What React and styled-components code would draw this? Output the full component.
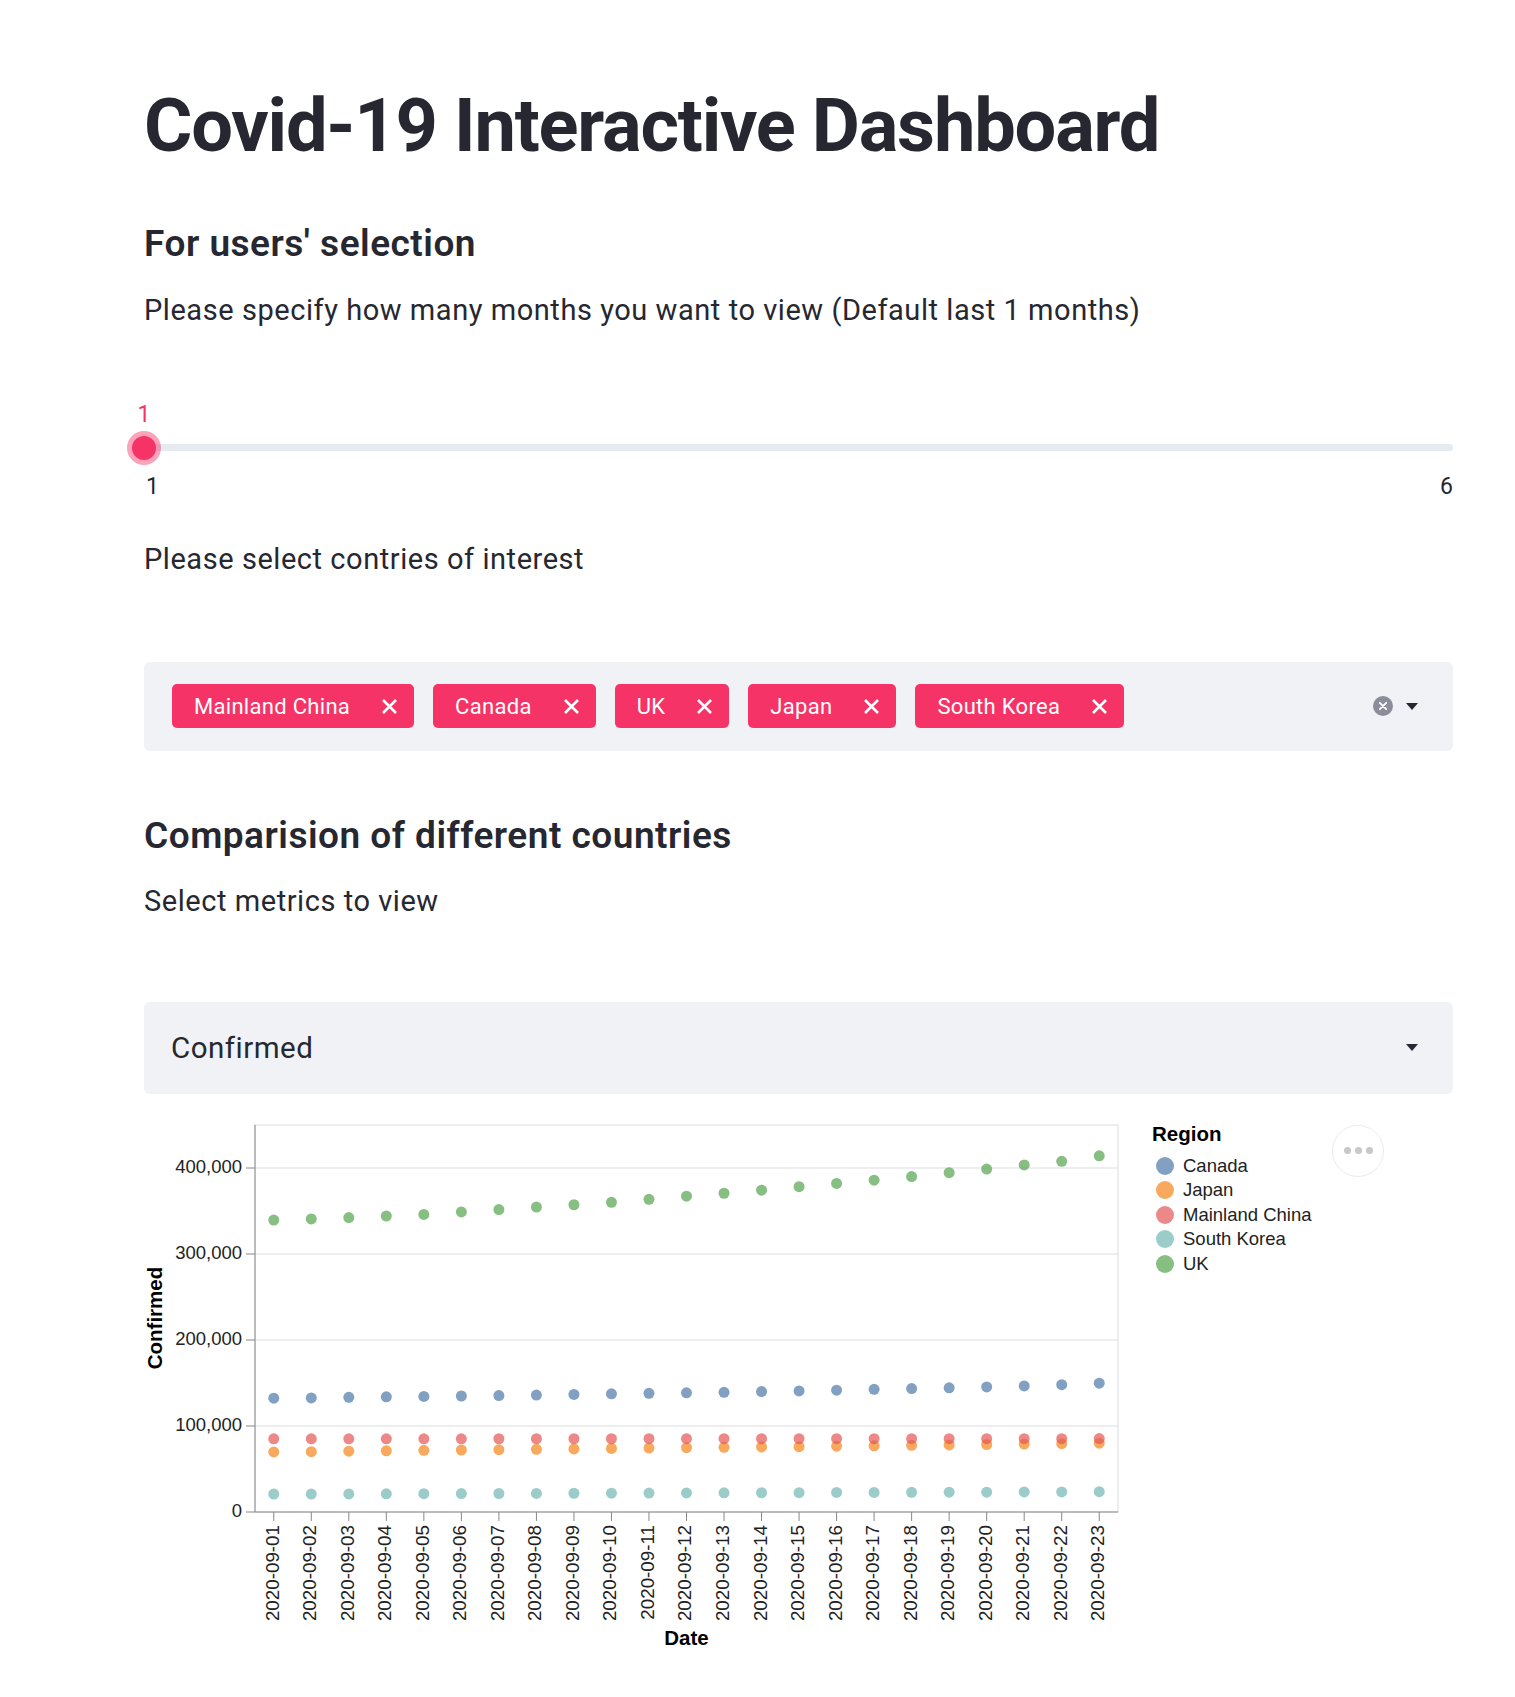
import React from 'react';
import styled, { createGlobalStyle } from 'styled-components';

const GlobalStyle = createGlobalStyle`
  body {
    margin: 0;
    background: #fff;
    color: #262730;
    font-family: Roboto, "Noto Sans", sans-serif;
  }
`;

const Page = styled.main`
  padding: 82px 62px 37px 144px;
`;

const Title = styled.h1`
  margin: 0;
  font-size: 74px;
  line-height: 1.2;
  font-weight: 700;
  letter-spacing: -1.2px;
`;

const Heading = styled.h3`
  margin: ${p => p.$top}px 0 0;
  font-size: 37px;
  line-height: 44px;
  font-weight: 600;
  letter-spacing: 0.5px;
`;

const Text = styled.p`
  margin: ${p => p.$top}px 0 0;
  font-size: 29px;
  line-height: 45px;
  letter-spacing: 0.55px;
`;

// slider
const SliderWrap = styled.div`
  position: relative;
  margin-top: 58px;
  padding-top: 53px;
`;

const Track = styled.div`
  height: 7px;
  border-radius: 4px;
  background: #e6eaf1;
`;

const Thumb = styled.span`
  position: absolute;
  top: 57px;
  width: 24px;
  height: 24px;
  margin: -12px 0 0 -12px;
  border-radius: 50%;
  background: #f63366;
  box-shadow: 0 0 0 5px rgba(246, 51, 102, 0.45);
`;

const ThumbValue = styled.span`
  position: absolute;
  top: 0;
  line-height: 48px;
  font-size: 23px;
  color: #f63366;
  transform: translateX(-50%);
`;

const TickRow = styled.div`
  display: flex;
  justify-content: space-between;
  margin-top: 20px;
  padding-left: 2px;
  line-height: 32px;
  font-size: 23px;
`;

// select boxes
const SelectBox = styled.div`
  margin-top: ${p => p.$top}px;
  height: ${p => p.$height}px;
  box-sizing: border-box;
  display: flex;
  align-items: center;
  padding: 0 35px 0 ${p => p.$padLeft}px;
  background: #f0f2f6;
  border-radius: 6px;
`;

const TagList = styled.div`
  display: flex;
  gap: 19px;
  flex: 1;
`;

const Tag = styled.span`
  display: inline-flex;
  align-items: center;
  height: 44px;
  padding: 0 16px 0 22px;
  background: #f63366;
  color: #fff;
  border-radius: 5px;
  font-size: 22px;
  letter-spacing: 0.3px;
`;

const TagClose = styled.svg`
  margin-left: 31px;
  width: 17px;
  height: 17px;
`;

const Indicators = styled.div`
  display: flex;
  align-items: center;
  gap: 13px;
`;

const SelectValue = styled.span`
  flex: 1;
  font-size: 29.5px;
  letter-spacing: 0.5px;
`;

const Arrow = () => (
  <svg width="12" height="7" viewBox="0 0 12 7">
    <path d="M0 0 L12 0 L6 7 Z" fill="#262730" />
  </svg>
);

const ClearIcon = () => (
  <svg width="20" height="20" viewBox="0 0 20 20">
    <circle cx="10" cy="10" r="10" fill="#8b8e9a" />
    <path d="M6.8 6.8 L13.2 13.2 M13.2 6.8 L6.8 13.2" stroke="#fff" strokeWidth="1.8" strokeLinecap="round" />
  </svg>
);

// chart
const ChartWrap = styled.div`
  position: relative;
  display: flex;
  margin-top: 16px;
`;

const Legend = styled.div`
  margin-left: 18px;
  padding-top: 12px;
  font-family: "Liberation Sans", Arial, sans-serif;
  color: #000;
`;

const LegendTitle = styled.div`
  font-size: 20.5px;
  font-weight: 700;
  line-height: 24px;
  margin-bottom: 8px;
`;

const LegendItem = styled.div`
  display: flex;
  align-items: center;
  height: 24.4px;
  font-size: 18.5px;
  color: #222;
`;

const Swatch = styled.span`
  width: 18px;
  height: 18px;
  margin: 0 9px 0 4px;
  border-radius: 50%;
  background: ${p => p.$color};
  opacity: 0.7;
`;

const MenuButton = styled.button`
  position: absolute;
  top: 15px;
  right: 69px;
  width: 52px;
  height: 52px;
  display: flex;
  align-items: center;
  justify-content: center;
  gap: 4px;
  padding: 0;
  background: #fff;
  border: 1px solid #ececec;
  border-radius: 50%;

  span {
    width: 7px;
    height: 7px;
    border-radius: 50%;
    background: #c8c8c8;
  }
`;

const series = [
  { name: 'Canada', color: '#4c78a8', values: [132300, 132700, 133300, 133900, 134400, 134900, 135400, 136000, 136700, 137400, 138000, 138600, 139200, 140000, 140800, 141700, 142600, 143500, 144400, 145400, 146600, 148100, 149800] },
  { name: 'Japan', color: '#f58518', values: [69800, 70200, 70700, 71200, 71700, 72100, 72500, 72900, 73400, 73900, 74400, 74800, 75200, 75600, 76000, 76500, 77000, 77500, 78000, 78500, 79000, 79500, 80000] },
  { name: 'Mainland China', color: '#e45756', values: [85100, 85110, 85120, 85130, 85140, 85150, 85160, 85170, 85180, 85190, 85200, 85210, 85220, 85230, 85240, 85250, 85260, 85270, 85280, 85290, 85300, 85310, 85320] },
  { name: 'South Korea', color: '#72b7b2', values: [20800, 20900, 21000, 21200, 21300, 21400, 21500, 21600, 21800, 21900, 22000, 22200, 22300, 22400, 22500, 22700, 22800, 22900, 23000, 23100, 23300, 23400, 23600] },
  { name: 'UK', color: '#54a24b', values: [339415, 340819, 342351, 344164, 345949, 348935, 351657, 354621, 357269, 360056, 363546, 367180, 370655, 374233, 378224, 382050, 385801, 390061, 394541, 398709, 403560, 407807, 414212] },
];

const dates = Array.from({ length: 23 }, (_, i) => `2020-09-${String(i + 1).padStart(2, '0')}`);

const plot = { left: 111, right: 974, top: 15, bottom: 402 };
const step = (plot.right - plot.left) / dates.length;
const xPos = i => plot.left + (i + 0.5) * step;
const yPos = v => plot.bottom - (v * (plot.bottom - plot.top)) / 450000;

const ScatterChart = () => (
  <svg width="990" height="550" fontFamily='"Liberation Sans", Arial, sans-serif'>
    <rect x={plot.left} y={plot.top} width={plot.right - plot.left} height={plot.bottom - plot.top} fill="none" stroke="#ddd" />
    {[100000, 200000, 300000, 400000].map(v => (
      <line key={v} x1={plot.left} x2={plot.right} y1={yPos(v)} y2={yPos(v)} stroke="#ddd" />
    ))}
    {[0, 100000, 200000, 300000, 400000].map(v => (
      <g key={v}>
        <line x1={plot.left - 9} x2={plot.left} y1={yPos(v)} y2={yPos(v)} stroke="#888" />
        <text x={plot.left - 13} y={yPos(v)} textAnchor="end" dominantBaseline="middle" fontSize="18.5" fill="#222">
          {v.toLocaleString('en-US')}
        </text>
      </g>
    ))}
    {dates.map((d, i) => (
      <g key={d}>
        <line x1={xPos(i)} x2={xPos(i)} y1={plot.bottom} y2={plot.bottom + 9} stroke="#888" />
        <text transform={`translate(${xPos(i)} 415) rotate(-90)`} textAnchor="end" dominantBaseline="middle" fontSize="18.8" fill="#222">
          {d}
        </text>
      </g>
    ))}
    <line x1={plot.left} x2={plot.left} y1={plot.top} y2={plot.bottom} stroke="#888" />
    <line x1={plot.left} x2={plot.right} y1={plot.bottom} y2={plot.bottom} stroke="#888" />
    {series.map(s =>
      s.values.map((v, i) => (
        <circle key={s.name + i} cx={xPos(i)} cy={yPos(v)} r="5.5" fill={s.color} opacity="0.7" />
      ))
    )}
    <text transform="translate(13 208) rotate(-90)" textAnchor="middle" dominantBaseline="middle" fontSize="20.5" fontWeight="700">
      Confirmed
    </text>
    <text x={(plot.left + plot.right) / 2} y="530" textAnchor="middle" dominantBaseline="middle" fontSize="20.5" fontWeight="700">
      Date
    </text>
  </svg>
);

const countries = ['Mainland China', 'Canada', 'UK', 'Japan', 'South Korea'];

const Slider = ({ min, max, value }) => {
  const pct = ((value - min) / (max - min)) * 100;
  return (
    <SliderWrap>
      <ThumbValue style={{ left: `${pct}%` }}>{value}</ThumbValue>
      <Track />
      <Thumb style={{ left: `${pct}%` }} />
      <TickRow>
        <span>{min}</span>
        <span>{max}</span>
      </TickRow>
    </SliderWrap>
  );
};

export default function App() {
  return (
    <>
      <GlobalStyle />
      <Page>
        <Title>Covid-19 Interactive Dashboard</Title>
        <Heading $top={51}>For users' selection</Heading>
        <Text $top={22}>Please specify how many months you want to view (Default last 1 months)</Text>
        <Slider min={1} max={6} value={1} />
        <Text $top={34}>Please select contries of interest</Text>
        <SelectBox $top={80} $height={89} $padLeft={28}>
          <TagList>
            {countries.map(c => (
              <Tag key={c}>
                {c}
                <TagClose viewBox="0 0 17 17">
                  <path d="M2 2 L15 15 M15 2 L2 15" stroke="#fff" strokeWidth="2.6" />
                </TagClose>
              </Tag>
            ))}
          </TagList>
          <Indicators>
            <ClearIcon />
            <Arrow />
          </Indicators>
        </SelectBox>
        <Heading $top={63}>Comparision of different countries</Heading>
        <Text $top={21}>Select metrics to view</Text>
        <SelectBox $top={78} $height={92} $padLeft={27}>
          <SelectValue>Confirmed</SelectValue>
          <Arrow />
        </SelectBox>
        <ChartWrap>
          <ScatterChart />
          <Legend>
            <LegendTitle>Region</LegendTitle>
            {series.map(s => (
              <LegendItem key={s.name}>
                <Swatch $color={s.color} />
                {s.name}
              </LegendItem>
            ))}
          </Legend>
          <MenuButton>
            <span />
            <span />
            <span />
          </MenuButton>
        </ChartWrap>
      </Page>
    </>
  );
}
